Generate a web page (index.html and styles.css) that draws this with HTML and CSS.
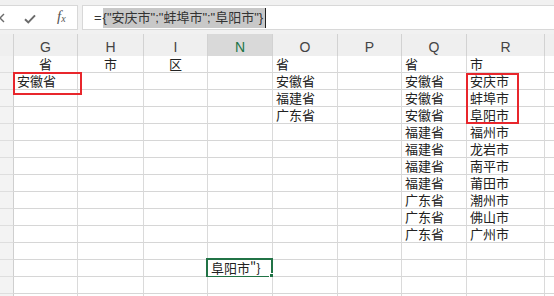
FILE: index.html
```html
<!DOCTYPE html>
<html lang="zh-CN">
<head>
<meta charset="utf-8">
<title>Excel</title>
<link rel="stylesheet" href="styles.css">
</head>
<body>
<div class="app">
  <div class="fbar">
    <div class="fbtns">
      <svg class="ico-x" width="10" height="10" viewBox="0 0 10 10"><path d="M1 1 L9 9 M9 1 L1 9" stroke="#6b6b6b" stroke-width="1.4" fill="none"/></svg>
      <svg class="ico-ok" width="12" height="10" viewBox="0 0 12 10"><path d="M1 5.2 L4.3 8.4 L11 1.4" stroke="#6b6b6b" stroke-width="2" fill="none"/></svg>
      <span class="fx">f<sub>x</sub></span>
    </div>
    <div class="finput"><span class="eq">=</span><span class="sel">{"安庆市";"蚌埠市";"阜阳市"}</span><span class="caret"></span></div>
  </div>
  <div class="sheet">
    <div class="row head">
      <div class="c rh"></div><div class="c">G</div><div class="c">H</div><div class="c">I</div><div class="c act">N</div><div class="c">O</div><div class="c">P</div><div class="c">Q</div><div class="c">R</div><div class="c"></div>
    </div>
    <div class="row"><div class="c rh"></div><div class="c ctr">省</div><div class="c ctr">市</div><div class="c ctr">区</div><div class="c"></div><div class="c">省</div><div class="c"></div><div class="c">省</div><div class="c">市</div><div class="c"></div></div>
    <div class="row"><div class="c rh"></div><div class="c">安徽省</div><div class="c"></div><div class="c"></div><div class="c"></div><div class="c">安徽省</div><div class="c"></div><div class="c">安徽省</div><div class="c">安庆市</div><div class="c"></div></div>
    <div class="row"><div class="c rh"></div><div class="c"></div><div class="c"></div><div class="c"></div><div class="c"></div><div class="c">福建省</div><div class="c"></div><div class="c">安徽省</div><div class="c">蚌埠市</div><div class="c"></div></div>
    <div class="row"><div class="c rh"></div><div class="c"></div><div class="c"></div><div class="c"></div><div class="c"></div><div class="c">广东省</div><div class="c"></div><div class="c">安徽省</div><div class="c">阜阳市</div><div class="c"></div></div>
    <div class="row"><div class="c rh"></div><div class="c"></div><div class="c"></div><div class="c"></div><div class="c"></div><div class="c"></div><div class="c"></div><div class="c">福建省</div><div class="c">福州市</div><div class="c"></div></div>
    <div class="row"><div class="c rh"></div><div class="c"></div><div class="c"></div><div class="c"></div><div class="c"></div><div class="c"></div><div class="c"></div><div class="c">福建省</div><div class="c">龙岩市</div><div class="c"></div></div>
    <div class="row"><div class="c rh"></div><div class="c"></div><div class="c"></div><div class="c"></div><div class="c"></div><div class="c"></div><div class="c"></div><div class="c">福建省</div><div class="c">南平市</div><div class="c"></div></div>
    <div class="row"><div class="c rh"></div><div class="c"></div><div class="c"></div><div class="c"></div><div class="c"></div><div class="c"></div><div class="c"></div><div class="c">福建省</div><div class="c">莆田市</div><div class="c"></div></div>
    <div class="row"><div class="c rh"></div><div class="c"></div><div class="c"></div><div class="c"></div><div class="c"></div><div class="c"></div><div class="c"></div><div class="c">广东省</div><div class="c">潮州市</div><div class="c"></div></div>
    <div class="row"><div class="c rh"></div><div class="c"></div><div class="c"></div><div class="c"></div><div class="c"></div><div class="c"></div><div class="c"></div><div class="c">广东省</div><div class="c">佛山市</div><div class="c"></div></div>
    <div class="row"><div class="c rh"></div><div class="c"></div><div class="c"></div><div class="c"></div><div class="c"></div><div class="c"></div><div class="c"></div><div class="c">广东省</div><div class="c">广州市</div><div class="c"></div></div>
    <div class="row"><div class="c rh"></div><div class="c"></div><div class="c"></div><div class="c"></div><div class="c"></div><div class="c"></div><div class="c"></div><div class="c"></div><div class="c"></div><div class="c"></div></div>
    <div class="row"><div class="c rh"></div><div class="c"></div><div class="c"></div><div class="c"></div><div class="c selcell">阜阳市"}<span class="handle"></span></div><div class="c"></div><div class="c"></div><div class="c"></div><div class="c"></div><div class="c"></div></div>
    <div class="row"><div class="c rh"></div><div class="c"></div><div class="c"></div><div class="c"></div><div class="c"></div><div class="c"></div><div class="c"></div><div class="c"></div><div class="c"></div><div class="c"></div></div>
    <div class="row"><div class="c rh"></div><div class="c"></div><div class="c"></div><div class="c"></div><div class="c"></div><div class="c"></div><div class="c"></div><div class="c"></div><div class="c"></div><div class="c"></div></div>
    <div class="mark mark-g"></div>
    <div class="mark mark-r"></div>
  </div>
</div>
</body>
</html>
```
FILE: styles.css
```css
html, body {
  margin: 0;
  padding: 0;
  background: #ffffff;
  overflow: hidden;
}
.app {
  width: 554px;
  height: 296px;
  overflow: hidden;
  font-family: "Liberation Sans", "Noto Sans CJK SC", sans-serif;
  color: #222;
  background: #f1f1f1;
}
.fbar {
  display: flex;
  height: 25px;
  padding: 5px 0 4px 0;
  gap: 4px;
}
.fbtns {
  width: 79px;
  margin-left: -1px;
  background: #fff;
  border: 1px solid #d8d8d8;
  border-left: none;
  box-sizing: border-box;
  position: relative;
}
.ico-x { position: absolute; left: -4px; top: 7px; }
.ico-ok { position: absolute; left: 25px; top: 8px; }
.fx {
  position: absolute;
  left: 58px;
  top: 2px;
  font-family: "Liberation Serif", serif;
  font-style: italic;
  font-size: 15px;
  color: #555;
}
.fx sub { font-size: 10px; vertical-align: -1px; }
.finput {
  flex: 1;
  background: #fff;
  border: 1px solid #d8d8d8;
  border-right: none;
  box-sizing: border-box;
  display: flex;
  align-items: center;
  padding-left: 11px;
  font-size: 13px;
  font-family: "Liberation Sans", "Noto Sans CJK SC", sans-serif;
  color: #333;
}
.eq { margin-right: 1px; }
.sel {
  background: #c8c8c8;
  line-height: 20px;
  padding-right: 2px;
}
.caret {
  width: 1px;
  height: 20px;
  background: #222;
}
.sheet {
  position: relative;
}
.row {
  display: grid;
  grid-template-columns: 14px 64px 66px 64px 65px 65px 64px 65px 78px 60px;
  height: 17px;
}
.row.head {
  height: 22px;
}
.c {
  box-sizing: border-box;
  border-right: 1px solid #dadada;
  border-bottom: 1px solid #d6d6d6;
  background: #fff;
  font-family: "Noto Sans CJK SC", sans-serif;
  font-size: 13px;
  line-height: 16px;
  padding-left: 3px;
  white-space: nowrap;
  position: relative;
  color: #222;
}
.c.ctr { text-align: center; padding-left: 0; }
.c.rh {
  background: #f3f3f3;
  border-right: 1px solid #cfcfcf;
  border-bottom: 1px solid #dedede;
}
.head .c {
  background: #efefef;
  font-family: "Liberation Sans", sans-serif;
  font-size: 14px;
  color: #444;
  text-align: center;
  padding-left: 0;
  line-height: 27px;
  border-right: 1px solid #d2d2d2;
  border-bottom: 1px solid #c9c9c9;
}
.head .c.act {
  background: #d9d9d9;
  color: #217346;
  border-bottom: 2px solid #217346;
}
.selcell::before {
  content: "";
  position: absolute;
  left: -2px;
  top: -2px;
  right: -1px;
  bottom: -2px;
  border: 2px solid #217346;
}
.handle {
  position: absolute;
  right: -3px;
  bottom: -3px;
  width: 4px;
  height: 4px;
  background: #217346;
  border: 1px solid #fff;
}
.mark {
  position: absolute;
  border: 2px solid #e8262c;
  box-sizing: border-box;
}
.mark-g {
  left: 13px;
  top: 38px;
  width: 69px;
  height: 23px;
}
.mark-r {
  left: 466px;
  top: 39px;
  width: 53px;
  height: 51px;
}
```
